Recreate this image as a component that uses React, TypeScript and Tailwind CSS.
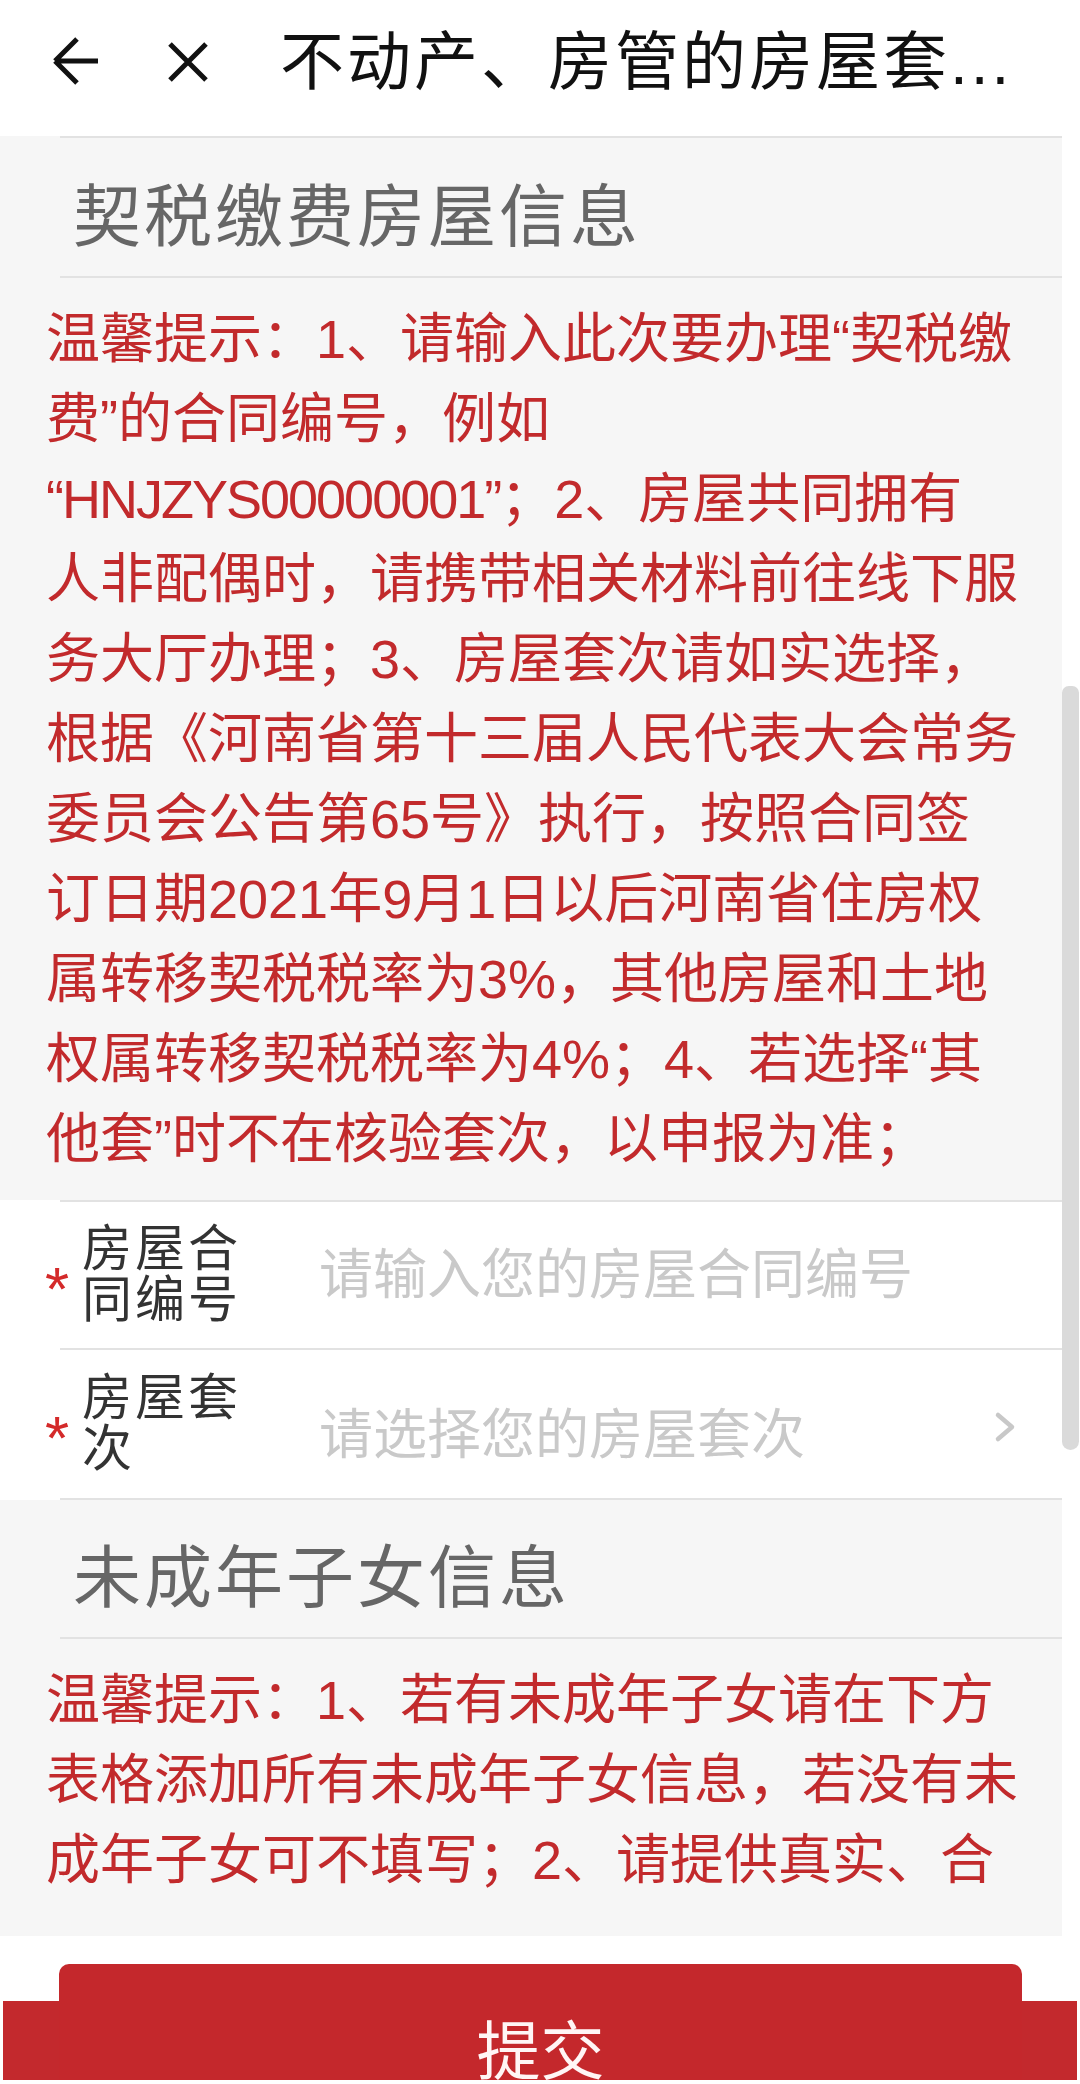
import React from "react";

const RED = "text-[#c22a2c]";

const sec1Lines: React.ReactNode[] = [
  "温馨提示：1、请输入此次要办理“契税缴",
  "费”的合同编号，例如",
  <>
    <span className="tracking-[-2px]">“HNJZYS00000001”</span>；2、房屋共同拥有
  </>,
  "人非配偶时，请携带相关材料前往线下服",
  "务大厅办理；3、房屋套次请如实选择，",
  "根据《河南省第十三届人民代表大会常务",
  "委员会公告第65号》执行，按照合同签",
  "订日期2021年9月1日以后河南省住房权",
  "属转移契税税率为3%，其他房屋和土地",
  "权属转移契税税率为4%；4、若选择“其",
  "他套”时不在核验套次，以申报为准；",
];

const sec2Lines = [
  "温馨提示：1、若有未成年子女请在下方",
  "表格添加所有未成年子女信息，若没有未",
  "成年子女可不填写；2、请提供真实、合",
];

function Divider() {
  return <div className="ml-[60px] h-[2px] bg-[#e2e2e2]" />;
}

function Heading({ children, pt }: { children: React.ReactNode; pt: string }) {
  return (
    <div
      className={`${pt} pb-[19px] pl-[73px] text-[68px] leading-[80px] tracking-[3px] text-[#666666] whitespace-nowrap`}
    >
      {children}
    </div>
  );
}

function Tips({ lines, pb }: { lines: React.ReactNode[]; pb: string }) {
  return (
    <div className={`pl-[46px] pt-[21px] ${pb} text-[54px] leading-[80px] ${RED}`}>
      {lines.map((l, i) => (
        <div key={i} className="whitespace-nowrap">
          {l}
        </div>
      ))}
    </div>
  );
}

function Row({
  label,
  placeholder,
  h,
  phOffset,
  chevron,
}: {
  label: string[];
  placeholder: string;
  h: string;
  phOffset: string;
  chevron?: boolean;
}) {
  return (
    <div className={`${h} flex items-center bg-white pl-[45px]`}>
      <span className="w-[37px] text-[62px] leading-[62px] text-[#d42a2a] pt-[28px] font-['Liberation_Sans',sans-serif]">
        *
      </span>
      <div className="w-[237px] text-[50px] leading-[51px] tracking-[3px] text-[#333333]">
        {label.map((l, i) => (
          <div key={i}>{l}</div>
        ))}
      </div>
      <div className={`flex-1 text-[54px] leading-[60px] text-[#c9c9c9] ${phOffset}`}>
        {placeholder}
      </div>
      {chevron && (
        <svg width="22" height="32" viewBox="0 0 22 32" className="mr-[46px] mt-[6px]">
          <polyline
            points="4,4 18,16 4,28"
            fill="none"
            stroke="#c8c8c8"
            strokeWidth="4.5"
            strokeLinecap="round"
            strokeLinejoin="round"
          />
        </svg>
      )}
    </div>
  );
}

export default function App() {
  return (
    <div className="w-[1080px] h-[2084px] bg-white overflow-hidden flex flex-col font-['Liberation_Sans','Noto_Sans_CJK_SC',sans-serif]">
      {/* header */}
      <div className="h-[136px] flex items-center bg-white shrink-0">
        <svg width="56" height="56" viewBox="0 0 56 56" className="ml-[48px] mb-[12px]">
          <path
            d="M7 27 H50 M7 27 L29 5 M7 27 L29 49"
            fill="none"
            stroke="#111"
            strokeWidth="5"
            strokeLinecap="butt"
          />
        </svg>
        <svg width="44" height="44" viewBox="0 0 44 44" className="ml-[62px] mb-[12px]">
          <path d="M4 4 L40 40 M40 4 L4 40" fill="none" stroke="#111" strokeWidth="5" />
        </svg>
        <div className="ml-[70px] mb-[18px] text-[64px] leading-[80px] tracking-[3px] text-[#111] whitespace-nowrap font-['Noto_Sans_CJK_SC',sans-serif]">
          不动产、房管的房屋套<span className="tracking-[3px] font-['Liberation_Sans',sans-serif]">...</span>
        </div>
      </div>

      {/* middle */}
      <div className="flex h-[1800px] shrink-0">
        <div className="w-[1062px] flex flex-col">
          <div className="bg-[#f6f6f6]">
            <Divider />
            <Heading pt="pt-[39px]">契税缴费房屋信息</Heading>
            <Divider />
            <Tips lines={sec1Lines} pb="pb-[21px]" />
          </div>
          <div className="bg-white">
            <Divider />
            <Row label={["房屋合", "同编号"]} placeholder="请输入您的房屋合同编号" h="h-[146px]" phOffset="" />
            <Divider />
            <Row
              label={["房屋套", "次"]}
              placeholder="请选择您的房屋套次"
              h="h-[148px]"
              phOffset="mt-[22px]"
              chevron
            />
            <Divider />
          </div>
          <div className="bg-[#f6f6f6] flex-1">
            <Heading pt="pt-[38px]">未成年子女信息</Heading>
            <Divider />
            <Tips lines={sec2Lines} pb="pb-[36px]" />
          </div>
        </div>
        <div className="w-[18px] bg-white flex flex-col">
          <div className="mt-[550px] h-[764px] w-[17px] rounded-b-[10px] rounded-t-[8px] bg-[#dadada]" />
        </div>
      </div>

      {/* footer */}
      <div className="relative flex-1 bg-white">
        <div className="absolute left-[3px] right-[3px] top-[65px] h-[79px] bg-[#c3292d]" />
        <div className="relative ml-[59px] w-[963px] mt-[28px] h-[116px] rounded-t-[10px] bg-[#c4282c] flex justify-center pt-[46px]">
          <span className="text-[64px] leading-[72px] text-[#fff5f5] font-['Noto_Sans_CJK_SC',sans-serif]">
            提交
          </span>
        </div>
      </div>
    </div>
  );
}
